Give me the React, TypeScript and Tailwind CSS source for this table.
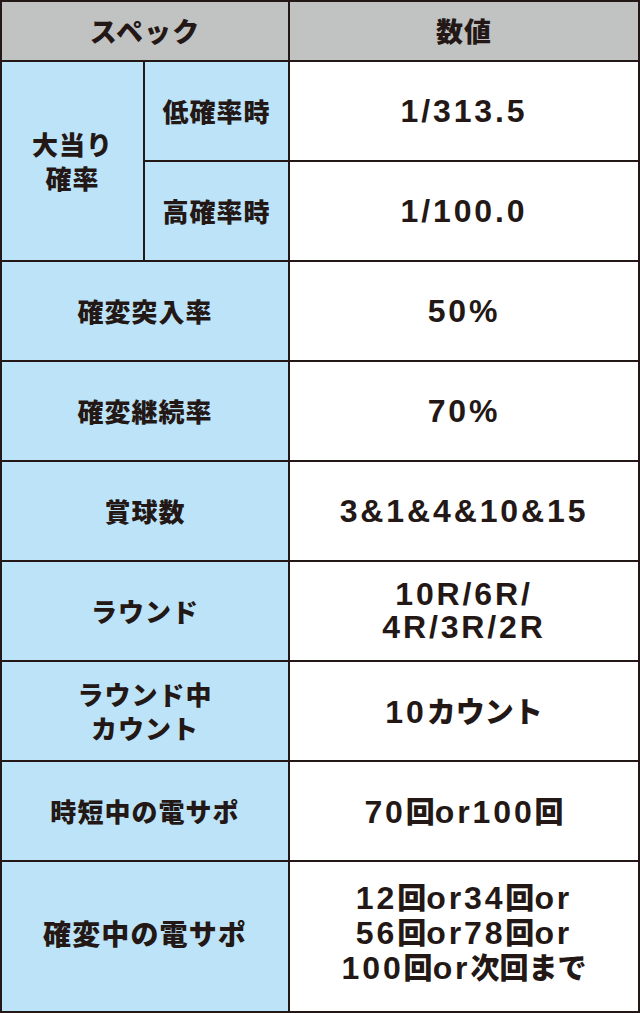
const rows: { label: string[]; value: string[] }[] = [
  { label: ['確変突入率'], value: ['50%'] },
  { label: ['確変継続率'], value: ['70%'] },
  { label: ['賞球数'], value: ['3&1&4&10&15'] },
  { label: ['ラウンド'], value: ['10R/6R/', '4R/3R/2R'] },
  { label: ['ラウンド中', 'カウント'], value: ['10カウント'] },
  { label: ['時短中の電サポ'], value: ['70回or100回'] },
];

const jp = "font-['Noto_Sans_CJK_JP',sans-serif] font-black leading-[34px] tracking-[0.04em]";
const num =
  "font-['Liberation_Sans','Noto_Sans_CJK_JP',sans-serif] font-bold text-[32px] leading-[33px] tracking-[0.09em]";

// split latin / japanese so the kana and kanji can sit tighter
const Mixed = ({ text }: { text: string }) => (
  <div>
    {text.split(/([^\x00-\x7f]+)/).map((part, i) =>
      /[^\x00-\x7f]/.test(part) ? (
        <span key={i} className="font-['Noto_Sans_CJK_JP',sans-serif] font-black text-[29px] tracking-normal">
          {part}
        </span>
      ) : (
        <span key={i}>{part}</span>
      ),
    )}
  </div>
);

const Lines = ({ lines }: { lines: string[] }) => (
  <>
    {lines.map((l) => (
      <Mixed key={l} text={l} />
    ))}
  </>
);

export default function App() {
  return (
    <div className="w-[640px] h-[1013px] bg-[#231815] p-[2px] text-[#231815]">
      <div className="grid h-full grid-cols-[141px_143px_348px] grid-rows-[58px_98px_98px_98px_98px_98px_98px_98px_98px_149px] gap-[2px]">
        <div className={`col-span-2 bg-[#c1c2c2] flex items-center justify-center ${jp} text-[27px]`}>
          スペック
        </div>
        <div className={`bg-[#c1c2c2] flex items-center justify-center ${jp} text-[27px]`}>数値</div>

        <div className={`row-span-2 bg-[#bde3f8] flex flex-col items-center justify-center text-center ${jp} text-[26px]`}>
          <div>大当り</div>
          <div>確率</div>
        </div>
        <div className={`bg-[#bde3f8] flex items-center justify-center ${jp} text-[26px]`}>低確率時</div>
        <div className={`bg-white flex items-center justify-center ${num}`}>1/313.5</div>
        <div className={`bg-[#bde3f8] flex items-center justify-center ${jp} text-[26px]`}>高確率時</div>
        <div className={`bg-white flex items-center justify-center ${num}`}>1/100.0</div>

        {rows.map((r) => (
          <div key={r.label.join()} className="contents">
            <div
              className={`col-span-2 bg-[#bde3f8] flex flex-col items-center justify-center text-center ${jp} text-[26px]`}
            >
              {r.label.map((l) => (
                <div key={l}>{l}</div>
              ))}
            </div>
            <div className={`bg-white flex flex-col items-center justify-center text-center ${num}`}>
              <Lines lines={r.value} />
            </div>
          </div>
        ))}

        <div className={`col-span-2 bg-[#bde3f8] flex items-center justify-center pb-2 ${jp} text-[28px]`}>
          確変中の電サポ
        </div>
        <div className={`bg-white flex flex-col items-center justify-center text-center pb-2 ${num}`}>
          <Lines lines={['12回or34回or', '56回or78回or', '100回or次回まで']} />
        </div>
      </div>
    </div>
  );
}
